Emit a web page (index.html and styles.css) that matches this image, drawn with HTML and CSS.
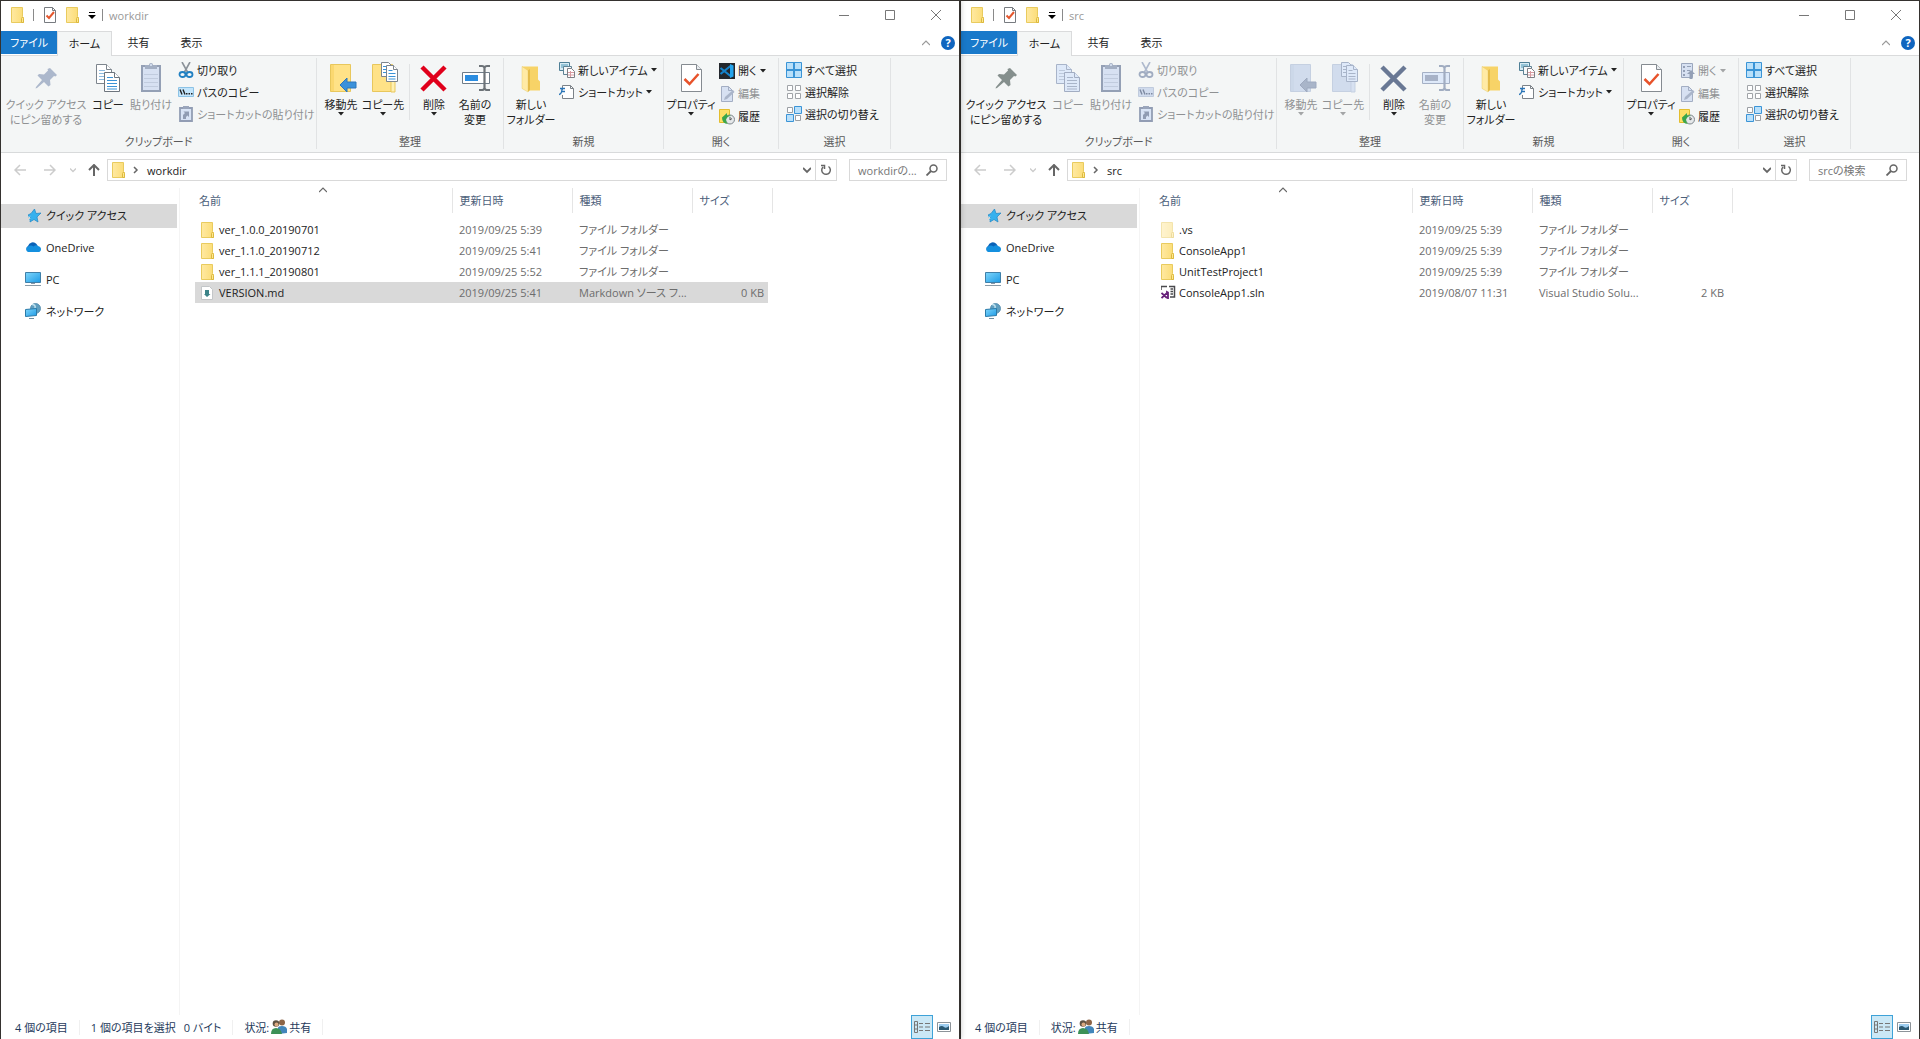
FILE: index.html
```html
<!DOCTYPE html>
<html lang="ja">
<head>
  <meta charset="UTF-8">
  <meta name="viewport" content="width=device-width, initial-scale=1.0">
  <title>workdir / src</title>
  <link rel="stylesheet" href="styles.css">
</head>
<body>
  <svg class="sprite" width="0" height="0" aria-hidden="true">
    <filter id="muted" color-interpolation-filters="sRGB">
      <feColorMatrix values=".11 .39 .04 0 .31  .11 .38 .04 0 .37  .1 .35 .04 0 .49  0 0 0 1 0"/>
    </filter>
    <linearGradient id="sky" x2="1" y2="1"><stop stop-color="#7fd6fb"/><stop offset="1" stop-color="#1d9be6"/></linearGradient>
    <linearGradient id="gold" x2="1"><stop stop-color="#ffe9a2"/><stop offset="1" stop-color="#fbdc75"/></linearGradient>

    <symbol id="folder" viewBox="0 0 16 16">
      <path d="M.5.5h11v9l1 1v5H.5z" fill="url(#gold)" stroke="#e9cb5e"/>
      <path d="M10.500 15.500v-4l1-1.500 1 1.500v4z" fill="#ffe88f" stroke="#dcb93f"/>
    </symbol>
    <symbol id="check-page" viewBox="0 0 16 16">
      <path d="M2.500.5h8l3 3v12h-11z" fill="#fff" stroke="#777b80"/>
      <path d="M10.500.5v3h3" fill="none" stroke="#777b80"/>
      <path d="M4.500 8.500l2.500 2.500 5-6" fill="none" stroke="#e4572e" stroke-width="2"/>
    </symbol>
    <symbol id="pin" viewBox="0 0 32 32">
      <path d="M20 6l7 7-1.500 1.500-1.500-.5-4 4 .5 5-2 1.500-4.500-4.500L7 26l-1.500.5.5-1.500 6-7-4.500-4.500L9 12l5 .5 4-4-.5-1.500z"/>
    </symbol>
    <symbol id="copy" viewBox="0 0 32 32">
      <g fill="#fff" stroke="#7d858d"><path d="M4.500 2.500h10l5 5v14h-15z"/><path d="M14.500 2.500v5h5"/></g>
      <path d="M7 8.500h6M7 11.500h10M7 14.500h10M7 17.500h10" stroke="#8dbbe0"/>
      <g fill="#fff" stroke="#6d757d"><path d="M12.500 10.500h10l5 5v14h-15z"/><path d="M22.500 10.500v5h5"/></g>
      <path d="M15 15.500h6M15 18.500h10M15 21.500h10M15 24.500h10M15 27h10" stroke="#3b93d6"/>
    </symbol>
    <symbol id="paste" viewBox="0 0 32 32">
      <path d="M7 4h18v25H7z" fill="#eeeeee" stroke="#395784" stroke-width="2"/>
      <path d="M9 12.500h14M9 16.500h14M9 20.500h14M9 24.500h14" stroke="#b9bcc4"/>
      <path d="M10 7V3h4a2 2 0 0 1 4 0h4v4z" fill="#77777c"/><circle cx="16" cy="3" r="1" fill="#fff"/>
    </symbol>
    <symbol id="cut" viewBox="0 0 16 16">
      <path d="M4 0l5.500 10M12 0L6.500 10" stroke="#8b9299" stroke-width="1.600"/>
      <g fill="none" stroke="#2180c2" stroke-width="1.800"><ellipse cx="4.500" cy="12.500" rx="3" ry="2.500"/><ellipse cx="11.500" cy="12.500" rx="3" ry="2.500"/></g>
    </symbol>
    <symbol id="path" viewBox="0 0 16 16">
      <path d="M.5 3.500h15v9H.5z" fill="#c3e5fb" stroke="#8cc3e6"/>
      <path d="M2 5.500l2 5M5 5.500l2 5" stroke="#222" stroke-width="1.400"/><path d="M8 9h1.500v1.500H8zM10.500 9H12v1.500h-1.500zM13 9h1.500v1.500H13z" fill="#222"/>
    </symbol>
    <symbol id="paste-link" viewBox="0 0 16 16">
      <path d="M2 2h12v13H2z" fill="#f4f4f4" stroke="#3a5170" stroke-width="1.800"/><path d="M5 0h6v3H5z" fill="#5b6270"/>
      <path d="M5 13V9l2-2-1.500-1.500H11V11L9.500 9.500 8 11v2z" fill="#345084"/>
    </symbol>
    <symbol id="move-to" viewBox="0 0 32 32">
      <path d="M5.500 2.500h20v27h-20z" fill="#ffe287" stroke="#e8c75c"/><path d="M6 3h3v26H6z" fill="#fbd870"/>
      <path d="M15 23l7-7v4h9v6h-9v4z" fill="#3a91da" stroke="#2d77bb"/>
    </symbol>
    <symbol id="copy-to" viewBox="0 0 32 32">
      <path d="M5.500 2.500h20v14l2 2v11h-22z" fill="#ffe287" stroke="#e8c75c"/><path d="M24 30V20l2-2 2 2v10z" fill="#fff0b0" stroke="#e8c75c"/>
      <g fill="#fff" stroke="#7d858d"><path d="M14.500.5h7l3 3v11h-10z"/><path d="M19.500 3.500h7l4 4v12h-11z"/><path d="M26.500 3.500v4h4"/></g>
      <path d="M16 4.500h3M16 7.500h3M16 10.500h3M21.500 8.500h4M21.500 11.500h7M21.500 14.500h7M21.500 17h7" stroke="#3b93d6"/>
    </symbol>
    <symbol id="delete" viewBox="0 0 32 32"><path d="M4 5l23 23M27 5L4 28" stroke="#e0001b" stroke-width="4.500"/></symbol>
    <symbol id="rename" viewBox="0 0 32 32">
      <path d="M3.500 10.500h27v11h-27z" fill="#fff" stroke="#6f7c88"/><path d="M6 13h13v6H6z" fill="#2b8de0"/>
      <path d="M20 4h3q2 0 2.500 2Q26 4 28 4h3M25.500 5v22M20 28h3q2 0 2.500-2 .5 2 2.500 2h3" fill="none" stroke="#6d7378" stroke-width="2.200"/>
    </symbol>
    <symbol id="new-folder" viewBox="0 0 32 32">
      <path d="M7 4.500h16v13l2 2v9H13l-6-2z" fill="#f7d367"/><path d="M7 4.500l6 4V30l-6-3.500z" fill="#ffeaa5" stroke="#e9cd70" stroke-width=".5"/><path d="M13 8.500l2-1.500v21l-2 2z" fill="#e4bb49"/>
    </symbol>
    <symbol id="new-item" viewBox="0 0 16 16">
      <path d="M.5.5h10v8H.5z" fill="#d9edf5" stroke="#4e7f96"/><path d="M2 3h7M2 5h3" stroke="#4f98b7"/>
      <path d="M4.500 4.500h8v8h-8z" fill="#f6f8f9" stroke="#5f8395"/><path d="M8.500 6.500h4l3 3v6h-7z" fill="#fff" stroke="#7d7f85"/><path d="M9 10.500h6M9 13h6M11.500 9v6" stroke="#d89aa0"/>
    </symbol>
    <symbol id="shortcut" viewBox="0 0 16 16">
      <path d="M3.500 6V1.500h8l3 3v10h-11V11" fill="#fff" stroke="#7c8288"/><path d="M11.500 1.500v3h3" fill="none" stroke="#7c8288"/><path d="M1 4.500h5M2 7.500h4M0 10.500Q3 10 3 4.500" fill="none" stroke="#2b76b8" stroke-width="1.300"/>
    </symbol>
    <symbol id="properties" viewBox="0 0 32 32">
      <path d="M6.500 2.500h15l5 5v22h-20z" fill="#fff" stroke="#858b91"/><path d="M21.500 2.500v5h5" fill="#e8ecef" stroke="#858b91"/>
      <path d="M9.500 17l5 5 9-10" fill="none" stroke="#e8532b" stroke-width="2.500"/>
    </symbol>
    <symbol id="vscode" viewBox="0 0 16 16">
      <path d="M0 0h16v16H0z" fill="#23272c"/><path d="M1.500 5l10 8M1.500 11l10-8" stroke="#1683cb" stroke-width="2.200"/><path d="M11 1l3.500 1.500v11L11 15z" fill="#25a5ee"/>
    </symbol>
    <symbol id="open" viewBox="0 0 16 16">
      <path d="M2.500.5h11v14h-11z" fill="#eee" stroke="#666"/><path d="M4 3h2v2H4zM4 7h2v2H4zM4 11h2v2H4zM8 3h4v1H8zM8 7h3v1H8z" fill="#555"/><path d="M12 7l4 4h-2.500v5h-3v-5H8z" fill="#555"/>
    </symbol>
    <symbol id="edit" viewBox="0 0 16 16">
      <path d="M2.500.5h7l4 4v11h-11z" fill="#eee" stroke="#777"/><path d="M9.500.5v4h4" fill="none" stroke="#777"/><path d="M5 14l1-3 8-7 1.500 2-7.500 7z" fill="#888"/>
    </symbol>
    <symbol id="history" viewBox="0 0 16 16">
      <path d="M.5.5h10v13H.5z" fill="#ffe066" stroke="#e3bd2e"/><circle cx="11" cy="10.500" r="4.500" fill="#e4e7e9" stroke="#7e868c"/>
      <path d="M11 8v3l2-1.500" fill="none" stroke="#555"/><path d="M3 8.500L8 4v2.500q3-.5 4 .5-4 0-5 4 .5 3 2 4-6-.5-6-6.500z" fill="#3ba64b"/>
    </symbol>
    <symbol id="select-all" viewBox="0 0 16 16"><path d="M.5.5h15v15H.5z" fill="#b9e0fa" stroke="#3a94d6"/><path d="M8 1v14M1 8h14" stroke="#3a94d6" stroke-width="2"/></symbol>
    <symbol id="select-none" viewBox="0 0 16 16"><path d="M1.500 1.500h5v5h-5zM9.500 1.500h5v5h-5zM1.500 9.500h5v5h-5zM9.500 9.500h5v5h-5z" fill="#fff" stroke="#a0a4a8"/></symbol>
    <symbol id="select-invert" viewBox="0 0 16 16"><path d="M1.500 1.500h5v5h-5zM9.500 9.500h5v5h-5z" fill="#fff" stroke="#9a9fa4"/><path d="M8.500.5h7v7h-7zM.5 8.500h7v7h-7z" fill="#b9e0fa" stroke="#3a94d6"/></symbol>

    <symbol id="star" viewBox="0 0 16 16"><path d="M9.500 2l1.500 4.500 5-.5-4 4 1 5-4-2.500L5 15l.5-4.500L3 8l3-1.500z" fill="#36b1ee" stroke="#1f86c4" stroke-width=".7"/><path d="M3 10l3-1M4 13l2-2" stroke="#5bbdec"/></symbol>
    <symbol id="onedrive" viewBox="0 0 16 16"><path d="M3.500 12.500A3 3 0 0 1 3 7a5 5 0 0 1 8.500-2L13 7.500 8 12.500z" fill="#0a62b8"/><path d="M3 13a3 3 0 0 1 0-5.500q3-2 5.500 0Q11 5.500 13 7q3 .8 3 3.200Q16 13 13 13z" fill="#1490df"/></symbol>
    <symbol id="pc" viewBox="0 0 16 16"><path d="M.5 1.500h15v10H.5z" fill="url(#sky)" stroke="#3f7fa8"/><path d="M6 12h4v1H6z" fill="#89a"/><path d="M0 14.500h16" stroke="#8a9aa6"/></symbol>
    <symbol id="network" viewBox="0 0 16 16"><circle cx="10.500" cy="5.500" r="5" fill="#5f9fc0" stroke="#4c87a8" stroke-width=".8"/><path d="M7 1.500q4 0 3 4" fill="none" stroke="#c2e2ef" stroke-width="1.500"/><path d="M.5 6.500l11-1v7l-11 1z" fill="url(#sky)" stroke="#2b7aa8"/><path d="M4 15.500h5" stroke="#6d8da0"/></symbol>
    <symbol id="markdown" viewBox="0 0 16 16"><path d="M.5 1.500h8l3 3v10H.5z" fill="#fff" stroke="#c3c6c8"/><path d="M4 5h4v4h1.500L6 12 3 9h1z" fill="#3b8388"/></symbol>
    <symbol id="solution" viewBox="0 0 16 16"><path d="M0 5V1.500h6M8 1.500h5.500V12H9M9.500 4h2.500M9.500 6.500h2.500M9.500 9h2.500" fill="none" stroke="#4a4a4d" stroke-width="1.500"/><path d="M.5 8l5.500 5M.5 13L6 8V7l1 .5V14" fill="none" stroke="#68217a" stroke-width="1.800"/></symbol>
    <symbol id="people" viewBox="0 0 16 16"><circle cx="11" cy="3.500" r="3" fill="#8d6547"/><path d="M7 15V9q0-2 4-2t5 3v4z" fill="#4286bb"/><circle cx="5" cy="4.500" r="3.300" fill="#5d5142"/><circle cx="5.500" cy="5.500" r="2" fill="#dba980"/><path d="M0 15q0-6 5-6t6 6z" fill="#3c9157"/></symbol>

    <symbol id="back" viewBox="0 0 12 12"><path d="M12 6H1M6 1L1 6l5 5" fill="none" stroke="currentColor" stroke-width="1.500"/></symbol>
    <symbol id="forward" viewBox="0 0 12 12"><path d="M0 6h11M6 1l5 5-5 5" fill="none" stroke="currentColor" stroke-width="1.500"/></symbol>
    <symbol id="up" viewBox="0 0 12 12"><path d="M6 12V1M1 6l5-5 5 5" fill="none" stroke="currentColor" stroke-width="2"/></symbol>
    <symbol id="chevron-down" viewBox="0 0 8 8"><path d="M0 2l4 4 4-4" fill="none" stroke="currentColor" stroke-width="1.800"/></symbol>
    <symbol id="chevron-up" viewBox="0 0 8 8"><path d="M0 6l4-4 4 4" fill="none" stroke="currentColor" stroke-width="1.200"/></symbol>
    <symbol id="chevron-right" viewBox="0 0 8 8"><path d="M3 1l3 3-3 3" fill="none" stroke="#666" stroke-width="1.500"/></symbol>
    <symbol id="refresh" viewBox="0 0 12 12"><path d="M8.500 2.500A4.300 4.300 0 1 1 3 3M1 1.500h3.500V5" fill="none" stroke="currentColor" stroke-width="1.500"/></symbol>
    <symbol id="search" viewBox="0 0 12 12"><circle cx="7.500" cy="4.500" r="3.500" fill="none" stroke="currentColor" stroke-width="1.500"/><path d="M5 7l-4.500 4.500" stroke="currentColor" stroke-width="1.800"/></symbol>
    <symbol id="arrow" viewBox="0 0 6 4"><path d="M0 0h6L3 3.500z" fill="currentColor"/></symbol>
    <symbol id="quick-arrow" viewBox="0 0 8 8"><path d="M1 1h6v1H1zM0 4h8L4 8z"/></symbol>
    <symbol id="minimize" viewBox="0 0 10 10"><path d="M0 5.500h10" stroke="currentColor"/></symbol>
    <symbol id="maximize" viewBox="0 0 10 10"><path d="M.5.5h9v9h-9z" fill="none" stroke="currentColor"/></symbol>
    <symbol id="close" viewBox="0 0 10 10"><path d="M0 0l10 10M10 0L0 10" stroke="currentColor"/></symbol>
    <symbol id="view-details" viewBox="0 0 16 12"><path d="M.5.5h3v11h-3zM.5 4h3M.5 8h3M5 2.500h4M5 6h4M5 9.500h4M11 2.500h5M11 6h5M11 9.500h5" fill="none" stroke="#777"/></symbol>
    <symbol id="view-large" viewBox="0 0 14 10"><path d="M.5.5h13v9H.5z" fill="#fff" stroke="#8c9399"/><path d="M2 2h10v6H2z" fill="#9dcdf0"/><path d="M2 5q3-2 5 0t5-1v4H2z" fill="#2a5872"/></symbol>
  </svg>

  <main class="desktop" id="desktop"></main>

  <script>
    const windows = [
      {
        name: 'workdir',
        search: 'workdirの...',
        openIcon: 'vscode',
        disabled: ['pin', 'paste', 'paste-link', 'edit'],
        files: [
          { icon: 'folder', name: 'ver_1.0.0_20190701', date: '2019/09/25 5:39', type: 'ファイル フォルダー', size: '' },
          { icon: 'folder', name: 'ver_1.1.0_20190712', date: '2019/09/25 5:41', type: 'ファイル フォルダー', size: '' },
          { icon: 'folder', name: 'ver_1.1.1_20190801', date: '2019/09/25 5:52', type: 'ファイル フォルダー', size: '' },
          { icon: 'markdown', name: 'VERSION.md', date: '2019/09/25 5:41', type: 'Markdown ソース フ...', size: '0 KB', state: 'selected' }
        ],
        status: '<span class="status-item">4 個の項目</span><span class="status-item"><span>1 個の項目を選択</span><span>0 バイト</span></span>'
      },
      {
        name: 'src',
        search: 'srcの検索',
        openIcon: 'open',
        disabled: ['copy', 'paste', 'cut', 'path', 'paste-link', 'move-to', 'copy-to', 'rename', 'open', 'edit'],
        mutedIcon: 'delete',
        files: [
          { icon: 'folder', name: '.vs', date: '2019/09/25 5:39', type: 'ファイル フォルダー', size: '', state: 'hidden-file' },
          { icon: 'folder', name: 'ConsoleApp1', date: '2019/09/25 5:39', type: 'ファイル フォルダー', size: '' },
          { icon: 'folder', name: 'UnitTestProject1', date: '2019/09/25 5:39', type: 'ファイル フォルダー', size: '' },
          { icon: 'solution', name: 'ConsoleApp1.sln', date: '2019/08/07 11:31', type: 'Visual Studio Solu...', size: '2 KB' }
        ],
        status: '<span class="status-item">4 個の項目</span>'
      }
    ];

    function icon(id, size, extra = '') {
      return `<svg class="icon icon-${size} ${extra}" aria-hidden="true"><use href="#${id}"/></svg>`;
    }

    const arrow = icon('arrow', 'arrow');

    function renderWindow(win) {
      const state = id => win.disabled.includes(id) ? 'disabled' : '';
      const muted = id => win.mutedIcon === id ? 'muted' : '';
      const big = (id, width, label, more = '') =>
        `<button class="big ${width}" ${state(id)}>${icon(id, 'big', id + ' ' + muted(id))}<span>${label}</span>${more}</button>`;
      const small = (id, label, more = '') =>
        `<button class="small" ${state(id)}>${icon(id, 'small')}<span>${label}</span>${more}</button>`;

      return `
        <section class="window" aria-label="${win.name}">
          <header class="title-bar">
            <div class="quick">
              ${icon('folder', 'small')}<i class="bar"></i>
              <button class="page" aria-label="プロパティ">${icon('check-page', 'small')}</button>
              <button aria-label="新しいフォルダー">${icon('folder', 'small')}</button>
              <button aria-label="カスタマイズ">${icon('quick-arrow', 'tiny')}</button><i class="bar"></i>
            </div>
            <h1>${win.name}</h1>
            <div class="controls">
              <button aria-label="最小化">${icon('minimize', 'control')}</button>
              <button aria-label="最大化">${icon('maximize', 'control')}</button>
              <button aria-label="閉じる">${icon('close', 'control')}</button>
            </div>
          </header>

          <nav class="tabs">
            <button class="file">ファイル</button>
            <button class="active">ホーム</button>
            <button>共有</button>
            <button>表示</button>
            <div class="tab-tools">
              <button aria-label="リボンの最小化">${icon('chevron-up', 'tiny')}</button>
              <button class="help" aria-label="ヘルプ">?</button>
            </div>
          </nav>

          <div class="ribbon">
            <div class="group clipboard">
              <div class="tools">
                ${big('pin', 'w-pin', 'クイック アクセス<br>にピン留めする')}
                ${big('copy', 'w-40', 'コピー')}
                ${big('paste', 'w-46', '貼り付け')}
                <div class="stack">
                  ${small('cut', '切り取り')}
                  ${small('path', 'パスのコピー')}
                  ${small('paste-link', 'ショートカットの貼り付け')}
                </div>
              </div>
              <h2>クリップボード</h2>
            </div>
            <div class="group organize">
              <div class="tools">
                ${big('move-to', 'w-42', '移動先', arrow)}
                ${big('copy-to', 'w-42', 'コピー先', arrow)}
                <i class="divider"></i>
                ${big('delete', 'w-40', '削除', arrow)}
                ${big('rename', 'w-42', '名前の<br>変更')}
              </div>
              <h2>整理</h2>
            </div>
            <div class="group new">
              <div class="tools">
                ${big('new-folder', 'w-48', '新しい<br>フォルダー')}
                <div class="stack">
                  ${small('new-item', '新しいアイテム', arrow)}
                  ${small('shortcut', 'ショートカット', arrow)}
                </div>
              </div>
              <h2>新規</h2>
            </div>
            <div class="group open">
              <div class="tools">
                ${big('properties', 'w-48', 'プロパティ', arrow)}
                <div class="stack loose">
                  ${small(win.openIcon, '開く', arrow)}
                  ${small('edit', '編集')}
                  ${small('history', '履歴')}
                </div>
              </div>
              <h2>開く</h2>
            </div>
            <div class="group select">
              <div class="tools">
                <div class="stack">
                  ${small('select-all', 'すべて選択')}
                  ${small('select-none', '選択解除')}
                  ${small('select-invert', '選択の切り替え')}
                </div>
              </div>
              <h2>選択</h2>
            </div>
          </div>

          <div class="address-row">
            <div class="nav-buttons">
              <button aria-label="戻る" disabled>${icon('back', 'nav')}</button>
              <button aria-label="進む" disabled>${icon('forward', 'nav')}</button>
              <button class="recent" aria-label="最近表示した場所" disabled>${icon('chevron-down', 'mini')}</button>
              <button aria-label="上へ">${icon('up', 'nav')}</button>
            </div>
            <div class="address">
              ${icon('folder', 'small')}${icon('chevron-right', 'tiny')}
              <a href="#">${win.name}</a>
              <button aria-label="履歴">${icon('chevron-down', 'tiny')}</button>
              <button class="refresh" aria-label="更新">${icon('refresh', 'nav')}</button>
            </div>
            <label class="search">
              <input type="text" placeholder="${win.search}" aria-label="検索">
              ${icon('search', 'nav')}
            </label>
          </div>

          <div class="content">
            <aside class="sidebar">
              <a class="current" href="#">${icon('star', 'small')}クイック アクセス</a>
              <a href="#">${icon('onedrive', 'small')}OneDrive</a>
              <a href="#">${icon('pc', 'small')}PC</a>
              <a href="#">${icon('network', 'small')}ネットワーク</a>
            </aside>
            <div class="list">
              <table>
                <colgroup><col class="col-name"><col class="col-date"><col class="col-date"><col class="col-size"><col class="col-end"></colgroup>
                <thead>
                  <tr>
                    <th class="sorted">名前${icon('chevron-up', 'tiny')}</th>
                    <th>更新日時</th><th>種類</th><th colspan="2">サイズ</th>
                  </tr>
                </thead>
                <tbody>
                  ${win.files.map(file => `
                    <tr class="${file.state || ''}">
                      <td class="name"><div>${icon(file.icon, 'small')}${file.name}</div></td>
                      <td>${file.date}</td><td>${file.type}</td><td class="size">${file.size}</td><td></td>
                    </tr>`).join('')}
                </tbody>
              </table>
            </div>
          </div>

          <footer class="status">
            ${win.status}
            <span class="status-item sharing">状況:${icon('people', 'small')}共有</span>
            <div class="views">
              <button class="on" aria-label="詳細">${icon('view-details', 'details')}</button>
              <button aria-label="大アイコン">${icon('view-large', 'large')}</button>
            </div>
          </footer>
        </section>`;
    }

    document.getElementById('desktop').innerHTML = windows.map(renderWindow).join('');
  </script>
</body>
</html>
```
FILE: styles.css
```css
* {
  box-sizing: border-box;
}

body {
  margin: 0;
  font-family: "Open Sans", "Noto Sans CJK JP", sans-serif;
  font-size: 11px;
  line-height: 15px;
  font-feature-settings: "palt";
  color: #222;
  background-color: #fff;
}

button,
input {
  font: inherit;
  font-feature-settings: inherit;
  color: inherit;
  padding: 0;
  border: none;
  background: none;
}

a {
  color: inherit;
  text-decoration: none;
}

h1,
h2 {
  margin: 0;
  font-size: 11px;
  font-weight: normal;
}

.sprite {
  position: absolute;
}

.desktop {
  display: grid;
  grid-template-columns: 1fr 1fr;
  min-height: 100vh;
}

.window {
  display: flex;
  flex-direction: column;
  min-width: 0;
  border: 1px solid #35322f;
  border-bottom: none;
  background-color: #fff;
}

.window:first-child {
  z-index: 1;
  box-shadow: 0 0 6px rgba(0, 0, 0, 0.3);
}

/* icons */
.icon {
  display: block;
  flex: none;
}

.icon-big {
  width: 32px;
  height: 32px;
}

.icon-small {
  width: 16px;
  height: 16px;
}

.icon-nav {
  width: 12px;
  height: 12px;
}

.icon-control {
  width: 10px;
  height: 10px;
}

.icon-tiny {
  width: 8px;
  height: 8px;
}

.icon-mini {
  width: 6px;
  height: 6px;
}

.icon-arrow {
  width: 6px;
  height: 4px;
}

.icon-details {
  width: 16px;
  height: 12px;
}

.icon-large {
  width: 14px;
  height: 10px;
}

.pin {
  fill: #858f8d;
}

.muted,
.ribbon button:disabled .icon-big,
.ribbon button:disabled .icon-small {
  filter: url(#muted);
}

.ribbon button:disabled .icon {
  opacity: 0.8;
}

/* title bar */
.title-bar {
  display: flex;
  align-items: center;
  height: 30px;
  padding-bottom: 2px;
}

.quick {
  display: flex;
  align-items: center;
  gap: 6px;
  padding-left: 10px;
}

.quick .bar {
  width: 1px;
  height: 12px;
  margin-right: 2px;
  background-color: #8a8a8a;
}

.quick .page {
  margin-right: 2px;
}

.title-bar h1 {
  padding-left: 4px;
  color: #999;
}

.controls {
  display: flex;
  margin-left: auto;
}

.controls button {
  display: grid;
  place-items: center;
  width: 46px;
  height: 28px;
  color: #777;
}

/* tabs */
.tabs {
  display: flex;
  height: 25px;
  border-bottom: 1px solid #dadbdc;
}

.tabs > button {
  width: 53px;
  padding-bottom: 2px;
}

.tabs .file {
  width: 56px;
  height: 23px;
  padding-bottom: 0;
  color: #fff;
  background-color: #1979ca;
}

.tabs .active {
  width: 55px;
  height: 25px;
  border: 1px solid #dadbdc;
  border-bottom: none;
  background-color: #f4f6f6;
}

.tab-tools {
  display: flex;
  align-items: center;
  gap: 11px;
  margin-left: auto;
  padding-right: 4px;
  color: #999;
}

.help {
  width: 14px;
  height: 14px;
  border-radius: 50%;
  line-height: 14px;
  font-weight: bold;
  color: #fff;
  background-color: #0f65bf;
}

/* ribbon */
.ribbon {
  display: flex;
  height: 97px;
  border-bottom: 1px solid #d8dadb;
  background-color: #f4f6f6;
}

.group {
  display: flex;
  flex-direction: column;
  margin: 2px 0 3px;
  border-right: 1px solid #e1e3e4;
}

.clipboard {
  min-width: 316px;
}

.organize {
  min-width: 187px;
}

.new {
  min-width: 160px;
}

.open {
  min-width: 115px;
}

.select {
  min-width: 112px;
}

.group h2 {
  margin-top: auto;
  text-align: center;
  color: #5a5a5a;
}

.tools {
  display: flex;
  padding-left: 3px;
  white-space: nowrap;
}

.big {
  display: flex;
  flex-direction: column;
  align-items: center;
  padding-top: 4px;
}

.big span {
  margin-top: 3px;
}

.w-pin {
  width: 84px;
}

.w-40 {
  width: 40px;
}

.w-42 {
  width: 42px;
}

.w-46 {
  width: 46px;
}

.w-48 {
  width: 48px;
}

.divider {
  width: 1px;
  height: 56px;
  margin: 6px 4px 0 5px;
  background-color: #e1e3e4;
}

.stack {
  padding-top: 1px;
}

.small {
  display: flex;
  align-items: center;
  gap: 3px;
  height: 22px;
  padding-left: 4px;
}

.loose .small {
  height: 23px;
}

.ribbon button:disabled {
  color: #8f9193;
}

/* address row */
.address-row {
  display: flex;
  padding: 6px 12px 7px 13px;
}

.nav-buttons {
  display: flex;
  align-items: center;
  width: 93px;
  color: #666;
}

.nav-buttons button {
  margin-right: 18px;
}

.nav-buttons .recent {
  margin: 0 12px 0 -4px;
}

.nav-buttons button:disabled {
  color: #ccc;
}

.address {
  display: flex;
  flex: 1;
  align-items: center;
  height: 22px;
  padding-left: 4px;
  border: 1px solid #d9d9d9;
}

.address a {
  flex: 1;
  padding-left: 8px;
}

.address .icon-small {
  margin-right: 3px;
}

.address button {
  padding: 0 4px;
  color: #666;
}

.address .refresh {
  align-self: stretch;
  border-left: 1px solid #d9d9d9;
}

.search {
  display: flex;
  align-items: center;
  width: 98px;
  margin-left: 12px;
  padding: 0 8px;
  border: 1px solid #d9d9d9;
  color: #666;
}

.search input {
  flex: 1;
  min-width: 0;
  outline: none;
}

.search input::placeholder {
  color: #767676;
  opacity: 1;
}

/* content */
.content {
  display: flex;
  flex: 1;
}

.sidebar {
  display: flex;
  flex-direction: column;
  gap: 8px;
  width: 179px;
  padding: 16px 2px 0 0;
  border-right: 1px solid #f4f4f4;
}

.sidebar a {
  display: flex;
  align-items: center;
  gap: 5px;
  height: 24px;
  padding: 0 0 2px 24px;
}

.sidebar .current {
  background-color: #d9d9d9;
}

.list {
  flex: 1;
  padding-left: 15px;
}

.list table {
  width: 577px;
  table-layout: fixed;
  border-collapse: collapse;
}

.col-name {
  width: 257px;
}

.col-date {
  width: 120px;
}

.col-size {
  width: 76px;
}

.col-end {
  width: 4px;
}

.list th {
  position: relative;
  height: 25px;
  padding: 0 0 0 7px;
  border-right: 1px solid #e5e5e5;
  font-weight: normal;
  text-align: left;
  color: #4c607a;
}

.list .sorted {
  padding-left: 4px;
}

.sorted .icon {
  position: absolute;
  top: -2px;
  left: 0;
  right: 0;
  margin: 0 auto;
  color: #666;
}

.list tbody::before {
  content: "";
  display: block;
  height: 6px;
}

.list td {
  height: 21px;
  padding: 0 0 0 7px;
  white-space: nowrap;
  color: #6d6d6d;
}

.list .name {
  padding-left: 6px;
  color: #222;
}

.name div {
  display: flex;
  align-items: center;
  gap: 2px;
}

.list .size {
  padding-right: 4px;
  text-align: right;
}

.list td:last-child {
  padding: 0;
}

.selected td:not(:last-child) {
  background-color: #d9d9d9;
}

.hidden-file .icon {
  opacity: 0.5;
}

/* status bar */
.status {
  display: flex;
  align-items: center;
  height: 24px;
  padding-left: 3px;
  color: #1e395b;
}

.status-item {
  display: flex;
  align-items: center;
  gap: 8px;
  padding: 0 11px;
  border-right: 1px solid #f0f0f0;
}

.sharing {
  gap: 2px;
}

.views {
  display: flex;
  margin-left: auto;
  padding-right: 4px;
}

.views button {
  display: grid;
  place-items: center;
  width: 22px;
  height: 24px;
}

.views .on {
  border: 1px solid #3ea2d8;
  background-color: #cbe8f6;
}
```
